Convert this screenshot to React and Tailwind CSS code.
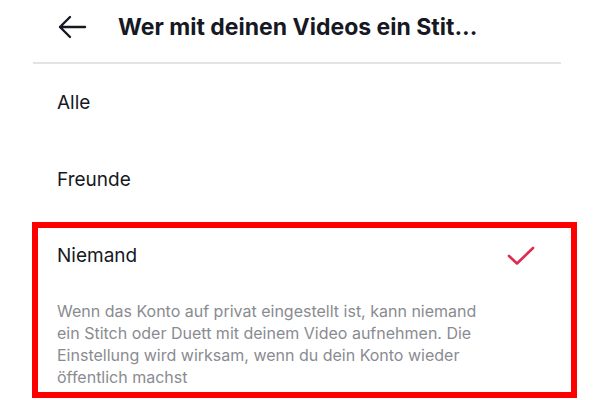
import React from "react";

const options = ["Alle", "Freunde"];

function CheckIcon() {
  return (
    <svg width="28" height="22" viewBox="0 0 28 22" fill="none">
      <path d="M2 11 L10 18.5 L26 3" stroke="#e0294f" strokeWidth="2.6" strokeLinecap="round" strokeLinejoin="round" />
    </svg>
  );
}

export default function App() {
  return (
    <div className="w-[600px] h-[400px] bg-white overflow-hidden" style={{ fontFamily: "Inter, 'Liberation Sans', sans-serif" }}>
      <div className="flex items-center h-[54px] pl-[57px] gap-[31px]">
        <svg width="30" height="24" viewBox="0 0 30 24" fill="none">
          <path d="M28 12 H3 M13 2 L3 12 L13 22" stroke="#161823" strokeWidth="2.4" strokeLinecap="round" strokeLinejoin="round" />
        </svg>
        <h1 className="text-[23px] font-bold text-[#161823] tracking-[0px]">Wer mit deinen Videos ein Stit...</h1>
      </div>
      <div className="ml-[33px] w-[528px] mt-[8px] h-[2px] bg-[#e3e3e4]" />
      {options.map((o) => (
        <div key={o} className="h-[77px] flex items-center pl-[57px] text-[19px] text-[#161823]">
          <span className="mt-[1px]">{o}</span>
        </div>
      ))}
      <div className="ml-[32px] w-[545px] h-[176px] mt-[4px] border-[6px] border-[#ff0000] pl-[19px] pr-[36px] pt-[14px]">
        <div className="flex items-center justify-between">
          <span className="text-[19px] text-[#161823]">Niemand</span>
          <CheckIcon />
        </div>
        <p className="mt-[29px] w-[440px] text-[16px] leading-[22px] text-[#8a8b91]">
          Wenn das Konto auf privat eingestellt ist, kann niemand ein Stitch oder Duett mit deinem Video aufnehmen. Die Einstellung wird wirksam, wenn du dein Konto wieder öffentlich machst
        </p>
      </div>
    </div>
  );
}
